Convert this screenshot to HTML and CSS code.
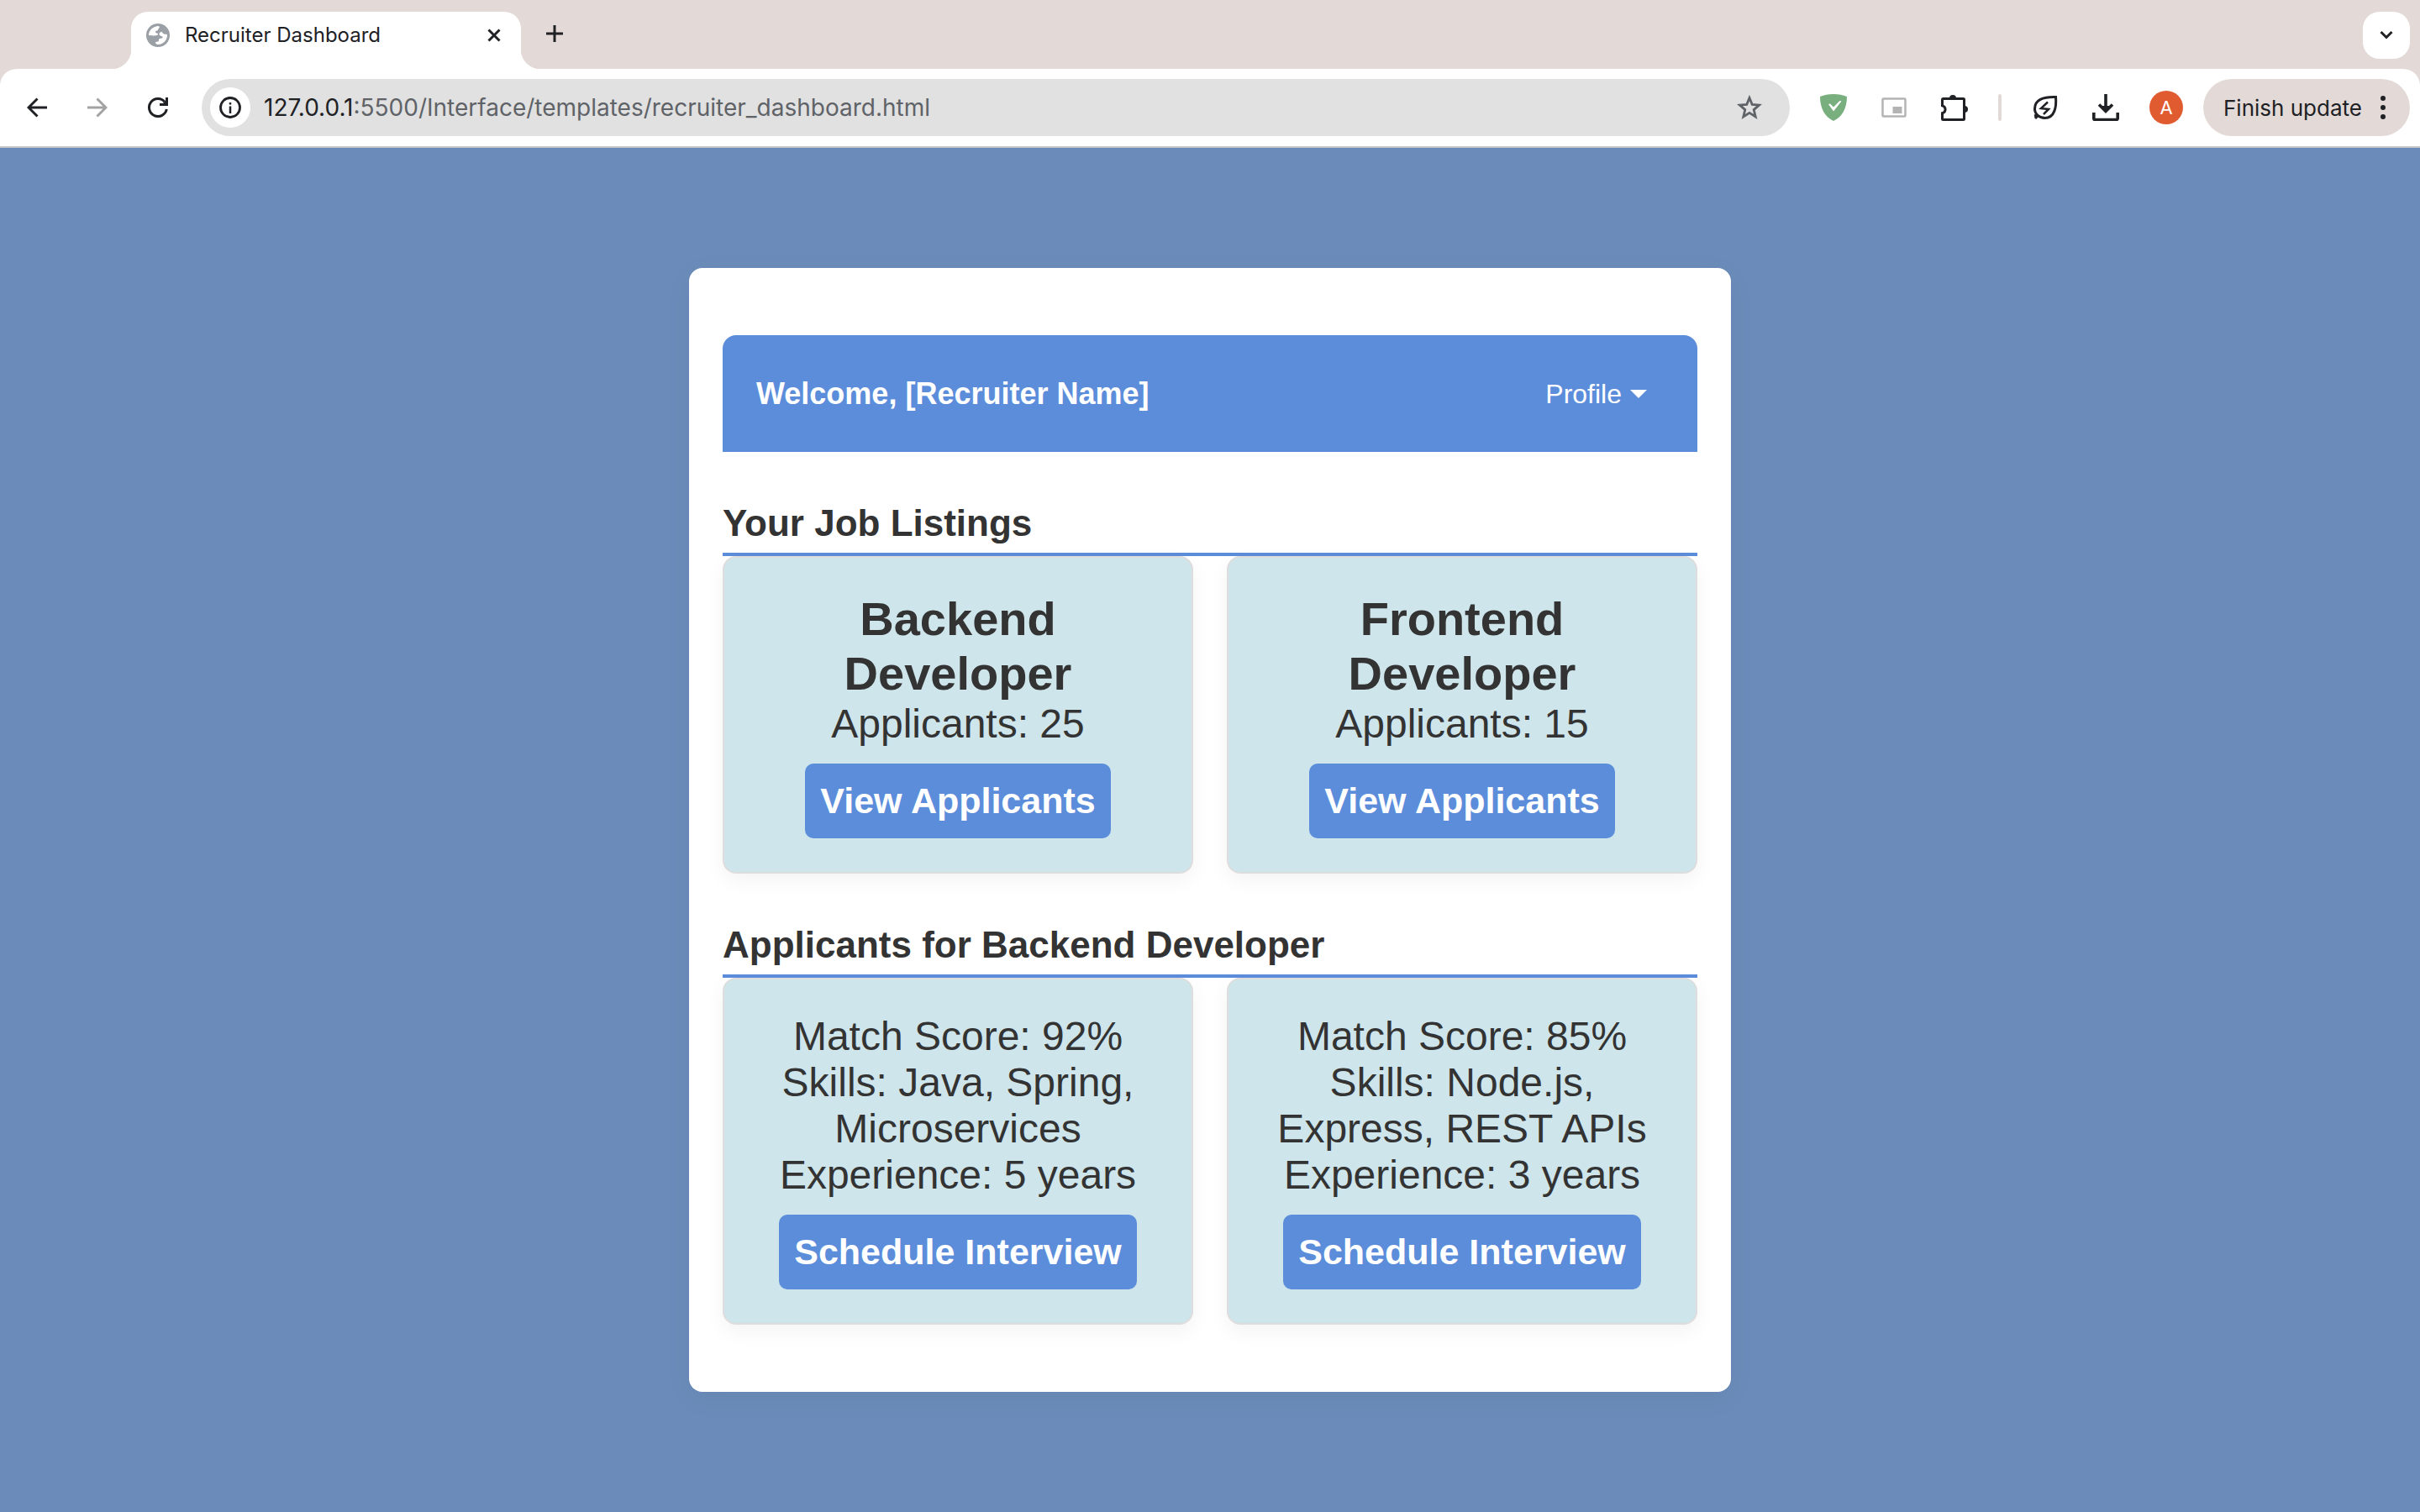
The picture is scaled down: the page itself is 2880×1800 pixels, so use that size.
FILE: index.html
```html
<!DOCTYPE html>
<html lang="en">
<head>
  <meta charset="UTF-8">
  <title>Recruiter Dashboard</title>
  <meta name="viewport" content="width=device-width, initial-scale=1">
  <link rel="stylesheet" href="styles.css">
</head>
<body>

  <header class="browser">
    <div class="tab-strip">
      <div class="tab">
        <svg class="icon" width="28" height="28" viewBox="0 0 28 28" aria-hidden="true">
          <circle cx="14" cy="14" r="14" fill="#9aa0a6"/>
          <path d="M3 14C3 8 8 3 15 3c2 2-1 3-1 4.500s-3 .5-3 2.500 3 1 3 2.500c0 2-3 2.500-11 1.500z" fill="#fff"/>
          <path d="M18 10c2 0 1 2 3.500 2.500L25 13c.5 6-4.500 12-11 12-2 0-3-1-3-3l3-.5c2-.5 0-3 2-3.500s4 0 3.500-2c-.5-1.500-3.500-1-4-3 0-2 1-3 2.500-3z" fill="#fff"/>
        </svg>
        <span class="tab-title">Recruiter Dashboard</span>
        <button class="icon-button" type="button" aria-label="Close tab">
          <svg class="icon" width="16" height="16" viewBox="0 0 16 16"><path d="M1.500 1.500l13 13M14.500 1.500l-13 13" stroke="#202124" stroke-width="3"/></svg>
        </button>
      </div>
      <button class="icon-button new-tab" type="button" aria-label="New tab">
        <svg class="icon" width="20" height="20" viewBox="0 0 20 20"><path d="M10 0v20M0 10h20" stroke="#202124" stroke-width="3"/></svg>
      </button>
      <button class="icon-button tab-search" type="button" aria-label="Search tabs">
        <svg class="icon" width="16" height="12" viewBox="0 0 16 12"><path d="M1.500 2L8 8.500 14.500 2" fill="none" stroke="#202124" stroke-width="3"/></svg>
      </button>
    </div>

    <div class="toolbar">
      <nav class="toolbar-nav" aria-label="History">
        <button class="icon-button" type="button" aria-label="Back">
          <svg class="icon" width="24" height="24" viewBox="0 0 24 24"><path d="M24 12H2M12.500 1.500L2 12l10.500 10.500" fill="none" stroke="#202124" stroke-width="3"/></svg>
        </button>
        <button class="icon-button" type="button" aria-label="Forward">
          <svg class="icon" width="24" height="24" viewBox="0 0 24 24"><path d="M0 12h22M11.500 1.500L22 12 11.500 22.500" fill="none" stroke="#a3a3a3" stroke-width="3"/></svg>
        </button>
        <button class="icon-button" type="button" aria-label="Reload">
          <svg class="icon" width="24" height="24" viewBox="0 0 24 24"><path d="M22.300 14A10.500 10.500 0 1 1 20 5.200" fill="none" stroke="#202124" stroke-width="3"/><path d="M21 0h3v10H14V7h4l3-3z" fill="#202124"/></svg>
        </button>
      </nav>

      <div class="address-bar">
        <button class="icon-button site-info" type="button" aria-label="View site information">
          <svg class="icon" width="26" height="26" viewBox="0 0 26 26"><circle cx="13" cy="13" r="11.500" fill="none" stroke="#202124" stroke-width="2.800"/><path d="M13 11.500V20M13 7v2.500" stroke="#202124" stroke-width="2.500"/></svg>
        </button>
        <a class="url" href="#"><span class="url-host">127.0.0.1</span>:5500/Interface/templates/recruiter_dashboard.html</a>
        <button class="icon-button" type="button" aria-label="Bookmark this tab">
          <svg class="icon" width="30" height="30" viewBox="0 0 30 30"><path d="M15 3.500l3.200 7.900 8.400.7-6.400 5.500 2 8.300L15 21.400l-7.200 4.500 2-8.300-6.400-5.500 8.400-.7z" fill="none" stroke="#5f6368" stroke-width="2.800"/></svg>
        </button>
      </div>

      <div class="extensions">
        <button class="icon-button extension" type="button" aria-label="Ad blocker">
          <svg class="icon" width="32" height="32" viewBox="0 0 32 32"><path d="M16 0c6 0 11 1 16 3 0 13-5 24-16 29C5 27 0 16 0 3c5-2 10-3 16-3z" fill="#79af7e"/><path d="M10 12l2-.5 4 4L23.500 8l2 .5L16 20.500z" fill="#fff"/></svg>
        </button>
        <button class="icon-button extension" type="button" aria-label="Picture in picture">
          <svg class="icon" width="30" height="24" viewBox="0 0 30 24"><rect x="1.500" y="1.500" width="27" height="21" rx="1" fill="none" stroke="#b4b4b4" stroke-width="2.500"/><path d="M13.500 11h11v8h-11z" fill="#b4b4b4"/></svg>
        </button>
        <button class="icon-button extension" type="button" aria-label="Extensions">
          <svg class="icon" width="32" height="32" viewBox="0 0 32 32"><path d="M2.500 5.500h24a1 1 0 0 1 1 1v23a1 1 0 0 1-1 1h-24a1 1 0 0 1-1-1v-6.800a4.500 4.500 0 0 0 0-8.800V6.500a1 1 0 0 1 1-1z" fill="none" stroke="#202124" stroke-width="3"/><path d="M10 5a4 4 0 0 1 8 0zM28 14a4 4 0 0 1 0 8z" fill="#202124"/></svg>
        </button>
        <span class="divider"></span>
        <button class="icon-button extension" type="button" aria-label="Energy saver">
          <svg class="icon" width="30" height="30" viewBox="0 0 30 30"><path d="M27.500 2.500c1 11-1 25-13 25C8 27.500 2.500 23 2.500 16.500 2.500 6 12 2 27.500 2.500zM7 24l-4 4M2 25l4-1" fill="none" stroke="#202124" stroke-width="3"/><path d="M18 8.500l-8 7.500 9 1-6 6" fill="none" stroke="#202124" stroke-width="2.500"/></svg>
        </button>
        <button class="icon-button extension" type="button" aria-label="Downloads">
          <svg class="icon" width="32" height="32" viewBox="0 0 32 32"><path d="M16 0v20M8 12.500l8 8 8-8M1.800 22v7a1.500 1.500 0 0 0 1.500 1.500h25.400a1.500 1.500 0 0 0 1.500-1.500v-7" fill="none" stroke="#202124" stroke-width="3.600"/><path d="M10 14h12l-6 6z" fill="#202124"/></svg>
        </button>
        <button class="icon-button extension avatar" type="button" aria-label="Account">A</button>
      </div>

      <button class="update-button" type="button">
        Finish update
        <svg class="icon" width="6" height="28" viewBox="0 0 6 28" aria-hidden="true" fill="#202124"><circle cx="3" cy="3" r="3"/><circle cx="3" cy="14" r="3"/><circle cx="3" cy="25" r="3"/></svg>
      </button>
    </div>
  </header>

  <main class="page">
    <div class="container">
      <div class="welcome">
        <h1 class="welcome-title">Welcome, [Recruiter Name]</h1>
        <button class="profile-toggle" type="button">Profile</button>
      </div>

      <section class="section">
        <h2 class="section-title">Your Job Listings</h2>
        <div class="cards">
          <article class="card">
            <h3 class="card-title">Backend Developer</h3>
            <p>Applicants: 25</p>
            <button class="btn" type="button">View Applicants</button>
          </article>
          <article class="card">
            <h3 class="card-title">Frontend Developer</h3>
            <p>Applicants: 15</p>
            <button class="btn" type="button">View Applicants</button>
          </article>
        </div>
      </section>

      <section class="section">
        <h2 class="section-title">Applicants for Backend Developer</h2>
        <div class="cards">
          <article class="card">
            <p>Match Score: 92%</p>
            <p>Skills: Java, Spring, Microservices</p>
            <p>Experience: 5 years</p>
            <button class="btn" type="button">Schedule Interview</button>
          </article>
          <article class="card">
            <p>Match Score: 85%</p>
            <p>Skills: Node.js, Express, REST APIs</p>
            <p>Experience: 3 years</p>
            <button class="btn" type="button">Schedule Interview</button>
          </article>
        </div>
      </section>
    </div>
  </main>

</body>
</html>
```
FILE: styles.css
```css
* {
  box-sizing: border-box;
}

body {
  display: flex;
  flex-direction: column;
  min-height: 100vh;
  margin: 0;
  color: #333;
  background-color: #6b8cba;
  font-family: Arial, "Liberation Sans", sans-serif;
}

h1, h2, h3, p {
  margin: 0;
}

button {
  border: 0;
  padding: 0;
  color: inherit;
  background: none;
  font-family: inherit;
  cursor: pointer;
}

.icon {
  display: block;
  flex: none;
}

.icon-button {
  display: flex;
  flex: none;
  align-items: center;
  justify-content: center;
}

/* Browser window */
.browser {
  color: #202124;
  background-color: #e3dad7;
  font-family: Inter, sans-serif;
}

.tab-strip {
  display: flex;
  align-items: flex-start;
  height: 82px;
  padding: 14px 12px 0 156px;
}

.tab {
  position: relative;
  display: flex;
  align-items: center;
  width: 464px;
  height: 68px;
  padding: 0 24px 12px 18px;
  border-radius: 20px 20px 0 0;
  background-color: #fff;
}
/* The curved feet of the tab */
.tab::before,
.tab::after {
  content: "";
  position: absolute;
  bottom: 0;
  width: 24px;
  height: 24px;
}
.tab::before {
  right: 100%;
  background: radial-gradient(circle at 0 0, transparent 24px, #fff 25px);
}
.tab::after {
  left: 100%;
  background: radial-gradient(circle at 100% 0, transparent 24px, #fff 25px);
}

.tab-title {
  flex: 1;
  margin-left: 18px;
  font-size: 24px;
  line-height: 30px;
}

.new-tab {
  width: 56px;
  height: 52px;
  margin-left: 12px;
}

.tab-search {
  width: 56px;
  height: 56px;
  margin-left: auto;
  border-radius: 20px;
  background-color: #fff;
}

.toolbar {
  display: flex;
  align-items: center;
  padding: 12px 12px 12px 32px;
  border-bottom: 2px solid #c9c9c9;
  border-radius: 20px 20px 0 0;
  background-color: #fff;
}

.toolbar-nav {
  display: flex;
  gap: 48px;
}

.address-bar {
  display: flex;
  flex: 1;
  align-items: center;
  height: 68px;
  margin-left: 40px;
  padding: 0 33px 0 10px;
  border-radius: 34px;
  background-color: #e1e1e1;
}

.site-info {
  width: 48px;
  height: 48px;
  border-radius: 50%;
  background-color: #fff;
}

.url {
  flex: 1;
  margin-left: 16px;
  color: #5f6368;
  font-size: 28px;
  line-height: 34px;
  text-decoration: none;
}
.url-host {
  color: #202124;
}

.extensions {
  display: flex;
  align-items: center;
  gap: 40px;
  margin: 0 28px 0 36px;
}

.extension {
  width: 32px;
}

.divider {
  width: 4px;
  height: 32px;
  margin: 0 -4px;
  border-radius: 2px;
  background-color: #e3dad7;
}

.avatar {
  width: 40px;
  height: 40px;
  margin: 0 -4px;
  border-radius: 50%;
  color: #fff;
  background-color: #e15b31;
  font-size: 22px;
}

.update-button {
  display: flex;
  align-items: center;
  justify-content: space-between;
  width: 246px;
  height: 68px;
  padding: 0 29px 0 24px;
  border-radius: 34px;
  background-color: #e3dad7;
  font-size: 26px;
  white-space: nowrap;
}

/* Dashboard */
.page {
  display: flex;
  flex: 1;
  align-items: center;
  justify-content: center;
}

.container {
  width: 100%;
  max-width: 1240px;
  padding: 80px 40px;
  border-radius: 16px;
  background-color: #fff;
  box-shadow: 0 8px 32px rgba(0, 0, 0, 0.05);
}

.welcome {
  display: flex;
  align-items: center;
  justify-content: space-between;
  min-height: 139px;
  padding: 40px;
  border-radius: 16px 16px 0 0;
  color: #fff;
  background-color: #5c8ddb;
}

.welcome-title {
  font-size: 36px;
  line-height: 42px;
}

.profile-toggle {
  display: flex;
  align-items: center;
  gap: 10px;
  padding: 0 20px;
  font-size: 32px;
  line-height: 38px;
}
.profile-toggle::after {
  content: "";
  border-top: 10px solid;
  border-right: 10px solid transparent;
  border-left: 10px solid transparent;
}

.section {
  padding-top: 60px;
}

.section-title {
  padding-bottom: 10px;
  border-bottom: 4px solid #5c8ddb;
  font-size: 44px;
  line-height: 50px;
}

.cards {
  display: grid;
  grid-template-columns: 1fr 1fr;
  gap: 40px;
}

.card {
  padding: 40px;
  border: 2px solid #ddd;
  border-radius: 16px;
  background-color: #cee5ec;
  box-shadow: 0 8px 24px rgba(0, 0, 0, 0.05);
  font-size: 48px;
  line-height: 55px;
  text-align: center;
}

.card-title {
  font-size: 56px;
  line-height: 65px;
}

.btn {
  display: block;
  margin: 20px auto 0;
  padding: 20px 18px;
  border-radius: 10px;
  color: #fff;
  background-color: #5c8ddb;
  font-size: 43px;
  font-weight: bold;
  line-height: 49px;
}
.btn:hover {
  background-color: #4a7bc8;
}
```
